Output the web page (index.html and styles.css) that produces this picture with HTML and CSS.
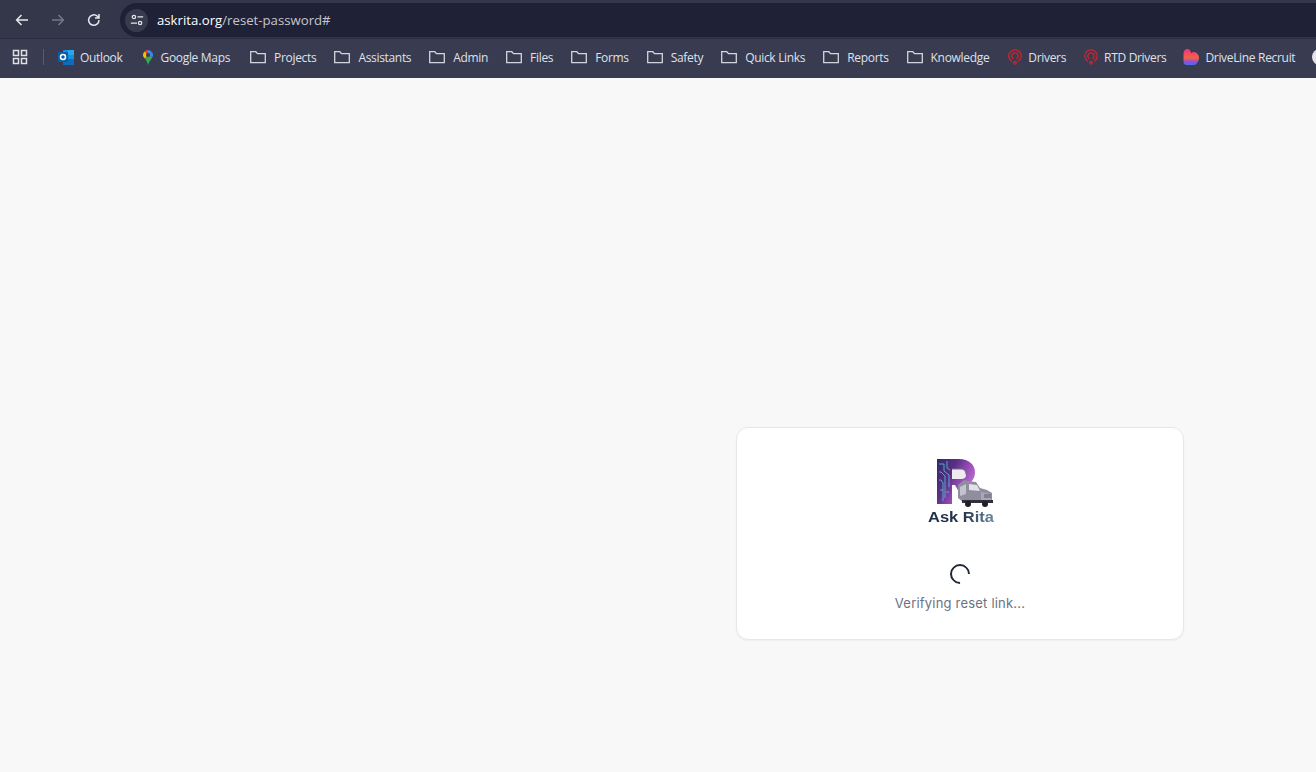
FILE: index.html
```html
<!DOCTYPE html>
<html lang="en">
<head>
<meta charset="utf-8">
<title>Reset password</title>
<link rel="stylesheet" href="styles.css">
</head>
<body>
<header class="browser">
  <div class="toolbar">
    <div class="nav">
      <svg class="nav-icon" viewBox="0 0 16 16"><path d="M14 8H3M7.500 3 2.600 8l4.900 5"/></svg>
      <svg class="nav-icon dim" viewBox="0 0 16 16"><path d="M2 8h11M8.500 3l4.900 5-4.900 5"/></svg>
      <svg class="nav-icon" viewBox="0 0 16 16"><path d="M13 8a5.200 5.200 0 1 1-1.600-3.700L13 6M13 2v4H9"/></svg>
    </div>
    <div class="omnibox">
      <span class="site-chip">
        <svg class="tune" viewBox="0 0 16 16"><circle cx="4.500" cy="4.500" r="1.900"/><path d="M8.500 4.500H15M1 11.500h7"/><circle cx="11.500" cy="11.500" r="1.900"/></svg>
      </span>
      <span class="url"><span class="host">askrita.org</span>/reset-password#</span>
    </div>
  </div>
  <nav class="bookmarks">
    <svg class="apps" viewBox="0 0 16 16"><path d="M1.500 1.500h5v5h-5zM9.500 1.500h5v5h-5zM1.500 9.500h5v5h-5zM9.500 9.500h5v5h-5z"/></svg>
    <span class="sep"></span>
    <a class="mark">
      <svg class="ico" viewBox="0 0 16 16"><rect x="5" y="1" width="11" height="15" rx="1" fill="#1490df"/><rect x="10" y="1" width="6" height="5" fill="#28a8ea"/><rect x="5" y="10" width="11" height="6" fill="#0f6cbd"/><rect y="3" width="10" height="10" rx="1" fill="#0a5ea8"/><circle cx="5" cy="8" r="2.500" fill="none" stroke="#fff" stroke-width="1.500"/></svg>
      Outlook
    </a>
    <a class="mark maps">
      <svg class="ico" viewBox="0 0 16 16"><path d="M4.500 2.400A5.200 5.200 0 0 1 8 1v5z" fill="#ea4335"/><path d="M8 1a5.200 5.200 0 0 1 4 2L8 6z" fill="#4285f4"/><path d="M3 6a5 5 0 0 1 1.500-3.600L8 6 5 9.500C3.800 8.500 3 7.500 3 6z" fill="#fbbc04"/><path d="M12 3a5 5 0 0 1 1 3c0 1-.3 1.800-.7 2.500L8 6z" fill="#4285f4"/><path d="M5 9.500 8 6l4.300 2.500C11 11 8.800 13 8 16c-.5-2.500-1.800-4.500-3-6.500z" fill="#34a853"/><circle cx="8" cy="6" r="2" fill="#3c3c48"/></svg>
      Google Maps
    </a>
    <a class="mark dir"><svg class="ico folder" viewBox="0 0 16 16"><path d="M.7 2.700h5.100l1.700 1.900h7.800v9H.7z"/></svg>Projects</a>
    <a class="mark dir"><svg class="ico folder" viewBox="0 0 16 16"><path d="M.7 2.700h5.100l1.700 1.900h7.800v9H.7z"/></svg>Assistants</a>
    <a class="mark dir"><svg class="ico folder" viewBox="0 0 16 16"><path d="M.7 2.700h5.100l1.700 1.900h7.800v9H.7z"/></svg>Admin</a>
    <a class="mark dir"><svg class="ico folder" viewBox="0 0 16 16"><path d="M.7 2.700h5.100l1.700 1.900h7.800v9H.7z"/></svg>Files</a>
    <a class="mark dir"><svg class="ico folder" viewBox="0 0 16 16"><path d="M.7 2.700h5.100l1.700 1.900h7.800v9H.7z"/></svg>Forms</a>
    <a class="mark dir"><svg class="ico folder" viewBox="0 0 16 16"><path d="M.7 2.700h5.100l1.700 1.900h7.800v9H.7z"/></svg>Safety</a>
    <a class="mark dir"><svg class="ico folder" viewBox="0 0 16 16"><path d="M.7 2.700h5.100l1.700 1.900h7.800v9H.7z"/></svg>Quick Links</a>
    <a class="mark dir"><svg class="ico folder" viewBox="0 0 16 16"><path d="M.7 2.700h5.100l1.700 1.900h7.800v9H.7z"/></svg>Reports</a>
    <a class="mark dir"><svg class="ico folder" viewBox="0 0 16 16"><path d="M.7 2.700h5.100l1.700 1.900h7.800v9H.7z"/></svg>Knowledge</a>
    <a class="mark tight"><svg class="ico pin" viewBox="0 0 16 16"><path d="M5 12.500A6.200 6.200 0 1 1 11 12.500"/><path d="M6.400 9.800A3.200 3.200 0 1 1 9.600 9.800"/><circle cx="8" cy="13.800" r="1.300"/></svg>Drivers</a>
    <a class="mark tight"><svg class="ico pin" viewBox="0 0 16 16"><path d="M5 12.500A6.200 6.200 0 1 1 11 12.500"/><path d="M6.400 9.800A3.200 3.200 0 1 1 9.600 9.800"/><circle cx="8" cy="13.800" r="1.300"/></svg>RTD Drivers</a>
    <a class="mark last">
      <svg class="ico" viewBox="0 0 16 16"><defs><linearGradient id="heart" x1="0" y1="0" x2="0" y2="1"><stop offset="0" stop-color="#f0308c"/><stop offset=".55" stop-color="#f4633c"/><stop offset=".8" stop-color="#8a4fe0"/><stop offset="1" stop-color="#4a6fe8"/></linearGradient></defs><path d="M.5 5C.5 2 2 0 4.200 0 6.500 0 7.800 2 8.200 4.500c1-1.200 2.300-1.600 3.800-1.300 2.500.5 4 2.800 4 5.500 0 3.500-2.300 7.300-6 7.300H3.500C1.500 16 .5 14.500.5 12.500z" fill="url(#heart)"/></svg>
      DriveLine Recruit
    </a>
    <span class="chrome-ball"></span>
  </nav>
</header>
<main class="page">
  <section class="card">
    <svg class="logo" viewBox="0 0 70 68" role="img" aria-label="Ask Rita logo">
      <defs>
        <linearGradient id="rfill" x1="0" y1="0" x2="1" y2=".6"><stop offset="0" stop-color="#2f2a66"/><stop offset=".4" stop-color="#5a2f86"/><stop offset=".7" stop-color="#9a4db8"/><stop offset="1" stop-color="#c07ad6"/></linearGradient>
        <linearGradient id="asktext" x1="0" y1="0" x2="1" y2="0"><stop offset="0" stop-color="#1d3048"/><stop offset=".55" stop-color="#26374f"/><stop offset="1" stop-color="#6a8ba6"/></linearGradient>
      </defs>
      <path d="M12 2h22c10 0 16 6 16 13 0 6-3 10-7 12l6 9-10 8-9-16h-3v19H12z" fill="url(#rfill)"/>
      <path d="M27 12h9c3 0 5 2 5 5.500S39 22 36 22h-9z" fill="#eeeaf0"/>
      <path d="M27 12h9c3 0 5 2 5 5.500" fill="none" stroke="#77718a" stroke-width="1"/>
      <path d="M14 7h5v7l5 4v12M14 15h2l4 4v22M14 23h2l2 3v18M22 4v7l3 2M15 33h3M21 35h3" fill="none" stroke="#53c6de" stroke-width=".8"/>
      <path d="M33 28l6-5 4 1 8 1 4 6 7 2 5 3v9H38l-5-4z" fill="#8f8d9e"/>
      <path d="M44 27l8 1 3 6-11-1z" fill="#e2e1e8"/>
      <path d="M35 30l6-3v10l-6 2z" fill="#c3c2cd"/>
      <path d="M56 35l10 2v6H56z" fill="#a8a7b5"/>
      <path d="M59 38h7M59 40h7" stroke="#4a4958" stroke-width=".8"/>
      <path d="M37 43h31v3H37z" fill="#2f2e3a"/>
      <circle cx="43" cy="47" r="3" fill="#1f1f28"/><circle cx="60" cy="47" r="3" fill="#1f1f28"/>
      <text class="logo-text" x="3" y="65" textLength="66" lengthAdjust="spacingAndGlyphs" fill="url(#asktext)">Ask Rita</text>
    </svg>
    <span class="spinner"></span>
    <p class="status">Verifying reset link...</p>
  </section>
</main>
</body>
</html>
```
FILE: styles.css
```css
* { box-sizing: border-box; }
html, body { margin: 0; height: 100%; overflow: hidden; }
body {
  width: 1316px;
  height: 772px;
  display: flex;
  flex-direction: column;
  background: #f8f8f8;
  font-family: "Open Sans", "Noto Sans", sans-serif;
}
.browser { flex: none; }
.toolbar {
  height: 38px;
  display: flex;
  align-items: center;
  background: #34364a;
  padding: 2px 0 0 14px;
}
.nav { display: flex; gap: 20px; width: 106px; flex: none; }
.nav-icon {
  width: 16px;
  height: 16px;
  fill: none;
  stroke: #e6e7ec;
  stroke-width: 1.500;
}
.nav-icon.dim { stroke: #75778a; }
.omnibox {
  flex: 1;
  height: 34px;
  background: #1f2136;
  border-radius: 17px 0 0 17px;
  display: flex;
  align-items: center;
  padding-left: 5px;
  gap: 9px;
}
.site-chip {
  width: 23px;
  height: 23px;
  border-radius: 50%;
  background: #383a4e;
  display: flex;
  align-items: center;
  justify-content: center;
}
.tune { width: 14px; height: 14px; fill: none; stroke: #e6e7ec; stroke-width: 1.400; }
.url {
  font-size: 13.200px;
  color: #c4c6d0;
  white-space: nowrap;
}
.host { color: #fff; }
.bookmarks {
  height: 40px;
  display: flex;
  align-items: center;
  background: #393b50;
  border-top: 1px solid #2b2d40;
  padding: 0 0 3px 12px;
  white-space: nowrap;
  overflow: hidden;
}
.apps { width: 16px; height: 16px; flex: none; fill: none; stroke: #dfe0e6; stroke-width: 1.500; }
.sep { width: 1px; height: 16px; background: #5a5c6e; margin: 0 14px 0 15px; flex: none; }
.mark {
  display: flex;
  align-items: center;
  gap: 6px;
  margin-right: 18px;
  font-size: 12px;
  letter-spacing: -.32px;
  color: #dfe2ea;
  flex: none;
}
.mark.maps { gap: 5px; margin: 0 20px 0 -1px; }
.mark.dir { gap: 8px; }
.mark.tight { gap: 5px; margin-right: 17px; }
.mark.last { margin-right: 17px; }
.ico { width: 16px; height: 16px; flex: none; }
.folder { fill: none; stroke: #d4d5dc; stroke-width: 1.300; }
.pin { fill: none; stroke: #c9252f; stroke-width: 1.400; }
.chrome-ball {
  width: 16px;
  height: 16px;
  border-radius: 50%;
  background: #e4e4e8;
  flex: none;
}
.page {
  flex: 1;
  display: flex;
  justify-content: flex-end;
  align-items: flex-end;
  padding: 0 132px 132px 0;
}
.card {
  width: 448px;
  height: 213px;
  background: #fff;
  border: 1px solid #e5e7eb;
  border-radius: 12px;
  box-shadow: 0 1px 2px rgba(0, 0, 0, .04);
  display: flex;
  flex-direction: column;
  align-items: center;
  padding-top: 29px;
}
.logo { width: 70px; height: 68px; display: block; filter: blur(.3px); }
.logo-text {
  font-family: "Liberation Sans", sans-serif;
  font-weight: 700;
  font-size: 14px;
}
.spinner {
  width: 20px;
  height: 20px;
  margin-top: 39px;
  border: 2px solid #1f2937;
  border-bottom-color: transparent;
  border-radius: 50%;
  transform: rotate(-45deg);
}
.status {
  margin: 9px 0 0;
  font-family: "Inter", sans-serif;
  font-size: 13px;
  line-height: 20px;
  letter-spacing: .2px;
  color: #6b7280;
}
```
